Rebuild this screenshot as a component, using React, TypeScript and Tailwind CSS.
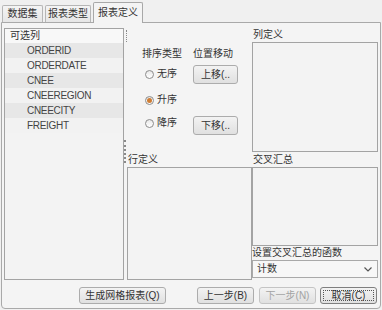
import React from "react";

const btn =
  "h-[17px] flex items-center justify-center rounded-[3px] border border-[#acacac] bg-gradient-to-b from-[#f3f3f3] to-[#e0e0e0] text-[10px] leading-none";

function Radio({ checked, label }: { checked?: boolean; label: string }) {
  return (
    <div className="flex h-[14px] items-center">
      <span className="ml-[3px] flex h-[9px] w-[9px] items-center justify-center rounded-full border border-[#8c8c8c] bg-gradient-to-b from-[#e8e8e8] to-[#ffffff]">
        {checked && <span className="h-[5px] w-[5px] rounded-full bg-[#cf7d34]" />}
      </span>
      <span className="ml-[3px] leading-none">{label}</span>
    </div>
  );
}

export default function App() {
  const fields = ["ORDERID", "ORDERDATE", "CNEE", "CNEEREGION", "CNEECITY", "FREIGHT"];
  return (
    <div className="h-[310px] w-[382px] overflow-hidden bg-[#f0f0f0] font-['Liberation_Sans','Noto_Sans_CJK_SC',sans-serif] text-[10px] text-[#333]">
      {/* tabs */}
      <div className="flex h-[22px] items-end pl-[2px]">
        <div className="flex h-[17px] w-[41px] items-center justify-center rounded-t-[2px] border border-b-0 border-[#b6b6b6] bg-gradient-to-b from-[#f4f4f4] to-[#e6e6e6] leading-none">
          数据集
        </div>
        <div className="ml-[2px] flex h-[17px] w-[46px] items-center justify-center rounded-t-[2px] border border-b-0 border-[#b6b6b6] bg-gradient-to-b from-[#f4f4f4] to-[#e6e6e6] leading-none">
          报表类型
        </div>
        <div className="relative z-10 -mb-px ml-[2px] flex h-[21px] w-[50px] items-center justify-center rounded-t-[2px] border border-b-0 border-[#a8a8a8] bg-[#f4f4f4] leading-none">
          报表定义
        </div>
      </div>

      {/* panel */}
      <div className="ml-[1px] h-[287px] w-[380px] rounded-b-[4px] border border-[#a9a9a9] bg-[#f4f4f4] pl-[2px] pt-[5px]">
        <div className="flex h-[252px]">
          {/* left list */}
          <div className="h-full w-[120px] border border-[#a3a3a3] bg-[#f3f3f3]">
            <div className="flex h-[14px] items-center bg-[#f8f8f8] pl-[5px] leading-none">可选列</div>
            {fields.map((f, i) => (
              <div
                key={f}
                className={
                  "flex h-[15px] items-center pl-[22px] leading-none tracking-[-0.3px] text-[#444] " +
                  (i % 2 === 0 ? "bg-[#e7e7e7]" : "bg-[#f2f2f2]")
                }
              >
                {f}
              </div>
            ))}
          </div>

          {/* splitter */}
          <div className="flex w-[3px] flex-col">
            <div className="ml-[2px] mt-[2px] h-[12px] border-l border-dotted border-[#8a8a8a]" />
            <div className="mt-[98px] h-[23px] border-l-2 border-dotted border-[#8a8a8a]" />
          </div>

          {/* middle */}
          <div className="flex w-[125px] flex-col">
            <div className="flex h-[124px]">
              <div className="w-[66px] pl-[15px]">
                <div className="mt-[19px] flex h-[14px] items-center leading-none">排序类型</div>
                <div className="mt-[6px]">
                  <Radio label="无序" />
                </div>
                <div className="mt-[12px]">
                  <Radio label="升序" checked />
                </div>
                <div className="mt-[9px]">
                  <Radio label="降序" />
                </div>
              </div>
              <div className="flex flex-col">
                <div className="mt-[19px] flex h-[14px] items-center leading-none">位置移动</div>
                <div className={btn + " mt-[4px] h-[19px] w-[45px]"}>上移(..</div>
                <div className={btn + " mt-[32px] h-[19px] w-[45px]"}>下移(..</div>
              </div>
            </div>
            <div className="flex h-[15px] items-end pb-[2px] pl-[1px] leading-none">行定义</div>
            <div className="h-[113px] w-[125px] border border-[#a3a3a3] bg-[#f3f3f3]" />
          </div>

          {/* right */}
          <div className="flex w-[126px] flex-col">
            <div className="flex h-[14px] items-center pl-[1px] leading-none">列定义</div>
            <div className="h-[110px] border border-[#a3a3a3] bg-[#f3f3f3]" />
            <div className="flex h-[15px] items-end pb-[2px] pl-[1px] leading-none">交叉汇总</div>
            <div className="h-[79px] border border-[#a3a3a3] bg-[#f3f3f3]" />
            <div className="flex h-[14px] items-center leading-none">设置交叉汇总的函数</div>
            <div className="flex h-[18px] items-center justify-between border border-[#a9a9a9] bg-[#f7f7f7] pl-[4px] pr-[5px] leading-none">
              <span>计数</span>
              <svg width="8" height="5" viewBox="0 0 8 5">
                <path d="M0.5 0.5 L4 4 L7.5 0.5" fill="none" stroke="#555" strokeWidth="1.2" />
              </svg>
            </div>
          </div>
        </div>

        {/* bottom buttons */}
        <div className="mt-[7px] flex">
          <div className={btn + " ml-[75px] w-[87px]"}>生成网格报表(Q)</div>
          <div className={btn + " ml-[31px] w-[57px]"}>上一步(B)</div>
          <div className={btn + " ml-[5px] w-[57px] border-[#c4c4c4] text-[#a3a3a3]"}>下一步(N)</div>
          <div className="ml-[4px] flex h-[17px] w-[57px] items-center justify-center rounded-[3px] border border-[#7f7f7f] bg-gradient-to-b from-[#f3f3f3] to-[#e0e0e0] p-[2px]">
            <div className="flex h-full w-full items-center justify-center border border-dotted border-[#555] leading-none">
              取消(C)
            </div>
          </div>
        </div>
      </div>
    </div>
  );
}
